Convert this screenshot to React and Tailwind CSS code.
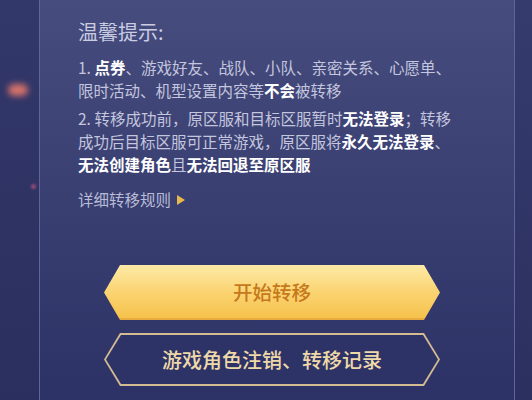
export default function App() {
  const font = { fontFamily: '"Noto Sans CJK SC", "Noto Sans", sans-serif' }
  return (
    <div className="w-[532px] h-[400px] overflow-hidden flex bg-gradient-to-b from-[#353a6c] to-[#2a2f5f]" style={font}>
      {/* left strip */}
      <div className="relative w-[39px] shrink-0 bg-gradient-to-b from-[#33386a] to-[#2a2f5f]">
        <div className="absolute left-[8px] top-[84px] w-[20px] h-[12px] rounded-full bg-[#e8786a] blur-[3px] opacity-90" />
        <div className="absolute left-[31px] top-[184px] w-[5px] h-[5px] rounded-full bg-[#b0507a] blur-[1px] opacity-80" />
      </div>

      {/* panel */}
      <div className="flex-1 flex flex-col border-l border-r border-[#5f659c] bg-gradient-to-b from-[#474c7e] via-[#3a3f72] to-[#2c3265] pl-[38px] pr-[20px] pt-[19px]">
        <h2 className="text-[20px] leading-[26px] text-[#c9cce2]">温馨提示:</h2>

        <p className="mt-[11px] text-[15.5px] leading-[22.5px] text-[#c3c6de]">
          1. <b className="font-semibold text-white">点券</b>、游戏好友、战队、小队、亲密关系、心愿单、<br />
          限时活动、机型设置内容等<b className="font-semibold text-white">不会</b>被转移
        </p>

        <p className="mt-[6px] text-[15.5px] leading-[23px] text-[#c3c6de]">
          2. 转移成功前，原区服和目标区服暂时<b className="font-semibold text-white">无法登录</b>；转移<br />
          成功后目标区服可正常游戏，原区服将<b className="font-semibold text-white">永久无法登录</b>、<br />
          <b className="font-semibold text-white">无法创建角色</b>且<b className="font-semibold text-white">无法回退至原区服</b>
        </p>

        <div className="mt-[12px] flex items-center gap-[6px] text-[15.5px] leading-[23px] text-[#b9bcd6]">
          <span>详细转移规则</span>
          <span className="w-0 h-0 border-y-[5px] border-y-transparent border-l-[8px] border-l-[#e9b84c]" />
        </div>

        {/* buttons */}
        <div className="mt-[54px] ml-[26px] w-[336px] flex flex-col gap-[13px]">
          <button className="h-[55px] flex items-center justify-center bg-gradient-to-b from-[#fdeaa6] via-[#fbd472] to-[#f6c24a] border-b-[2px] border-[#e6aa3e] [clip-path:polygon(16px_0,calc(100%-16px)_0,100%_50%,calc(100%-16px)_100%,16px_100%,0_50%)]">
            <span className="text-[19.5px] text-[#c5781c] font-medium">开始转移</span>
          </button>
          <div className="h-[53px] bg-[#d3bb92] p-[2px] [clip-path:polygon(16px_0,calc(100%-16px)_0,100%_50%,calc(100%-16px)_100%,16px_100%,0_50%)]">
            <button className="w-full h-full flex items-center justify-center bg-[#2d3367] [clip-path:polygon(15px_0,calc(100%-15px)_0,100%_50%,calc(100%-15px)_100%,15px_100%,0_50%)]">
              <span className="text-[20px] text-[#efd9a9] font-medium">游戏角色注销、转移记录</span>
            </button>
          </div>
        </div>
      </div>

      {/* right strip */}
      <div className="w-[17px] shrink-0 bg-gradient-to-b from-[#363b6e] to-[#2b3060]" />
    </div>
  )
}
